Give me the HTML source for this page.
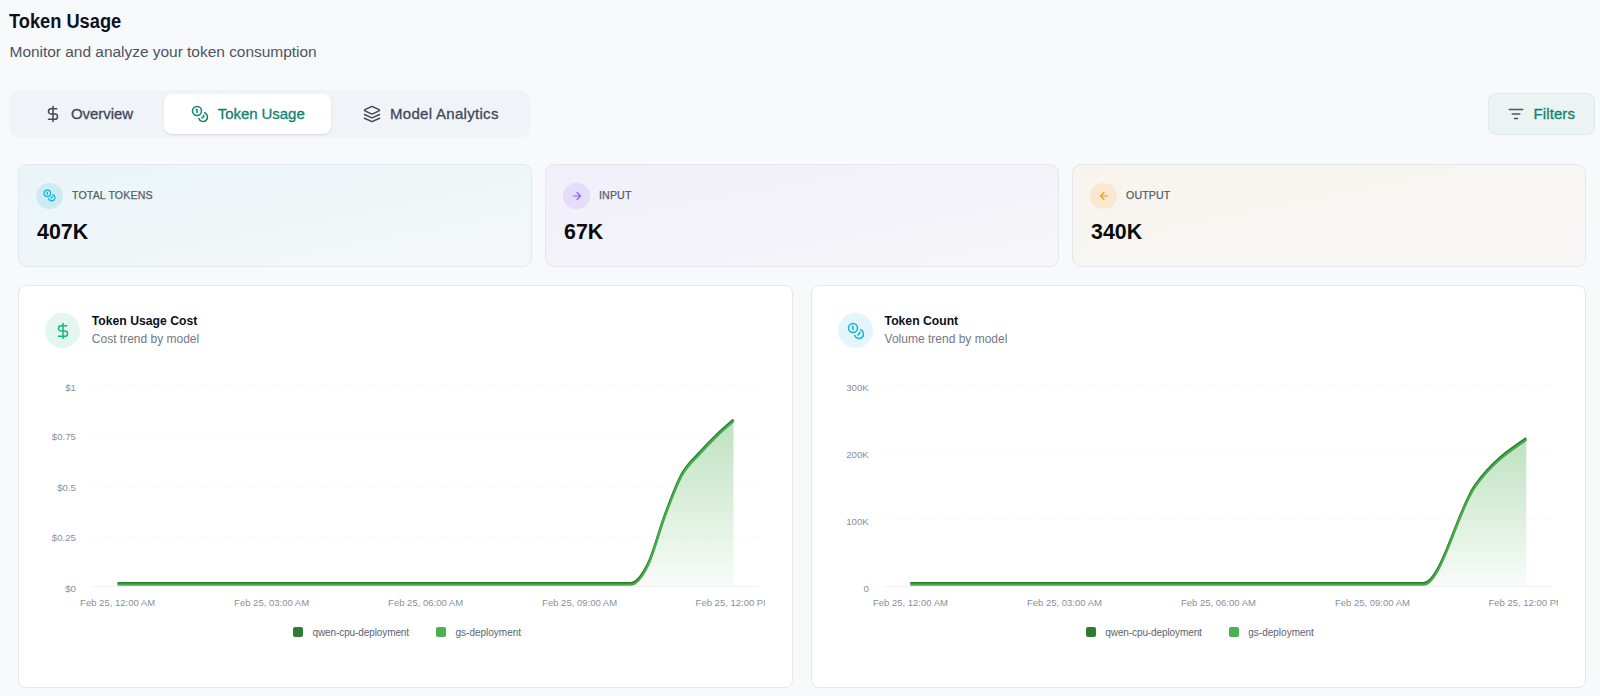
<!DOCTYPE html>
<html><head><meta charset="utf-8"><title>Token Usage</title>
<style>
html,body{margin:0;padding:0;}
body{width:1600px;height:696px;overflow:hidden;background:#f8f9fb;font-family:"Liberation Sans", sans-serif;position:relative;}
.t{position:absolute;white-space:nowrap;}
.ic{position:absolute;display:block;}
.box{position:absolute;box-sizing:border-box;}
</style></head><body>
<div class="t" style="left:9.30px;top:11.07px;font-size:20px;line-height:20px;color:#0b1220;font-weight:700;transform:scaleX(0.912);transform-origin:0 0;">Token Usage</div>
<div class="t" style="left:9.50px;top:43.88px;font-size:15.5px;line-height:15.5px;color:#4b5563;font-weight:400;letter-spacing:-0.03px;">Monitor and analyze your token consumption</div>
<div class="box" style="left:9px;top:90px;width:521px;height:48px;background:#f0f3f7;border-radius:10px;"></div>
<div class="box" style="left:164px;top:94px;width:167px;height:40px;background:#fff;border-radius:8px;box-shadow:0 1px 2px rgba(15,23,42,0.12);"></div>
<svg class="ic" style="left:43.85px;top:104.80px" width="18" height="18" viewBox="0 0 24 24" fill="none" stroke="#414957" stroke-width="2" stroke-linecap="round" stroke-linejoin="round"><line x1="12" x2="12" y1="2" y2="22"/><path d="M17 5H9.5a3.5 3.5 0 0 0 0 7h5a3.5 3.5 0 0 1 0 7H6"/></svg>
<div class="t" style="left:70.90px;top:105.90px;font-size:15px;line-height:15px;color:#414957;font-weight:400;letter-spacing:-0.04px;-webkit-text-stroke:0.3px #414957;">Overview</div>
<svg class="ic" style="left:190.50px;top:104.80px" width="18" height="18" viewBox="0 0 24 24" fill="none" stroke="#108272" stroke-width="2" stroke-linecap="round" stroke-linejoin="round"><circle cx="8" cy="8" r="6"/><path d="M18.09 10.37A6 6 0 1 1 10.34 18"/><path d="M7 6h1v4"/><path d="m16.71 13.88.7.71-2.82 2.82"/></svg>
<div class="t" style="left:217.70px;top:105.90px;font-size:15px;line-height:15px;color:#108272;font-weight:400;letter-spacing:-0.05px;-webkit-text-stroke:0.3px #108272;">Token Usage</div>
<svg class="ic" style="left:363.00px;top:104.80px" width="18" height="18" viewBox="0 0 24 24" fill="none" stroke="#414957" stroke-width="2" stroke-linecap="round" stroke-linejoin="round"><path d="m12.83 2.18a2 2 0 0 0-1.66 0L2.6 6.08a1 1 0 0 0 0 1.83l8.58 3.91a2 2 0 0 0 1.66 0l8.58-3.9a1 1 0 0 0 0-1.83Z"/><path d="m22 17.65-9.17 4.16a2 2 0 0 1-1.66 0L2 17.65"/><path d="m22 12.65-9.17 4.16a2 2 0 0 1-1.66 0L2 12.65"/></svg>
<div class="t" style="left:390.00px;top:105.90px;font-size:15px;line-height:15px;color:#414957;font-weight:400;letter-spacing:0.3px;-webkit-text-stroke:0.3px #414957;">Model Analytics</div>
<div class="box" style="left:1488px;top:93px;width:107px;height:42px;background:#ebf3f3;border:1px solid #e0eaea;border-radius:8px;"></div>
<svg class="ic" style="left:1506.75px;top:104.75px" width="18" height="18" viewBox="0 0 24 24" fill="none" stroke="#4b5563" stroke-width="2" stroke-linecap="round" stroke-linejoin="round"><path d="M3 6h18"/><path d="M7 12h10"/><path d="M10 18h4"/></svg>
<div class="t" style="left:1533.50px;top:106.10px;font-size:15px;line-height:15px;color:#108272;font-weight:400;letter-spacing:0.1px;-webkit-text-stroke:0.3px #108272;">Filters</div>
<div class="box" style="left:18.00px;top:164px;width:514px;height:103px;background:linear-gradient(to bottom right,#eaf5f8 0%,#f4f7f9 100%);border:1px solid #e3e8ef;border-radius:9px;"></div>
<div class="box" style="left:36.30px;top:182.7px;width:26.5px;height:26.5px;background:#cdebf3;border-radius:50%;"></div>
<svg class="ic" style="left:43.05px;top:189.45px" width="13" height="13" viewBox="0 0 24 24" fill="none" stroke="#0fb1d0" stroke-width="2.2" stroke-linecap="round" stroke-linejoin="round"><circle cx="8" cy="8" r="6"/><path d="M18.09 10.37A6 6 0 1 1 10.34 18"/><path d="M7 6h1v4"/><path d="m16.71 13.88.7.71-2.82 2.82"/></svg>
<div class="t" style="left:72.00px;top:190.03px;font-size:10.6px;line-height:10.6px;color:#565d69;font-weight:400;letter-spacing:0.15px;-webkit-text-stroke:0.25px #565d69;">TOTAL TOKENS</div>
<div class="t" style="left:37.10px;top:220.95px;font-size:22.5px;line-height:22.5px;color:#0a0a0a;font-weight:700;transform:scaleX(0.95);transform-origin:0 0;">407K</div>
<div class="box" style="left:545.00px;top:164px;width:514px;height:103px;background:linear-gradient(to bottom right,#f1eff9 0%,#f6f6f9 100%);border:1px solid #e3e8ef;border-radius:9px;"></div>
<div class="box" style="left:563.30px;top:182.7px;width:26.5px;height:26.5px;background:#e5dcf9;border-radius:50%;"></div>
<svg class="ic" style="left:570.55px;top:189.95px" width="12" height="12" viewBox="0 0 24 24" fill="none" stroke="#8b5cf6" stroke-width="2.2" stroke-linecap="round" stroke-linejoin="round"><path d="M5 12h14"/><path d="m12 5 7 7-7 7"/></svg>
<div class="t" style="left:599.00px;top:190.03px;font-size:10.6px;line-height:10.6px;color:#565d69;font-weight:400;letter-spacing:0.15px;-webkit-text-stroke:0.25px #565d69;">INPUT</div>
<div class="t" style="left:564.10px;top:220.95px;font-size:22.5px;line-height:22.5px;color:#0a0a0a;font-weight:700;transform:scaleX(0.95);transform-origin:0 0;">67K</div>
<div class="box" style="left:1072.00px;top:164px;width:514px;height:103px;background:linear-gradient(to bottom right,#f8f4ed 0%,#f7f7f6 100%);border:1px solid #e3e8ef;border-radius:9px;"></div>
<div class="box" style="left:1090.30px;top:182.7px;width:26.5px;height:26.5px;background:#f9e8cf;border-radius:50%;"></div>
<svg class="ic" style="left:1097.55px;top:189.95px" width="12" height="12" viewBox="0 0 24 24" fill="none" stroke="#f29a0c" stroke-width="2.2" stroke-linecap="round" stroke-linejoin="round"><path d="m12 19-7-7 7-7"/><path d="M19 12H5"/></svg>
<div class="t" style="left:1126.00px;top:190.03px;font-size:10.6px;line-height:10.6px;color:#565d69;font-weight:400;letter-spacing:0.15px;-webkit-text-stroke:0.25px #565d69;">OUTPUT</div>
<div class="t" style="left:1091.10px;top:220.95px;font-size:22.5px;line-height:22.5px;color:#0a0a0a;font-weight:700;transform:scaleX(0.95);transform-origin:0 0;">340K</div>
<div class="box" style="left:18px;top:285px;width:775px;height:403px;background:#fff;border:1px solid #e3e8ef;border-radius:8px;"></div>
<div class="box" style="left:45.20px;top:312.8px;width:35px;height:35px;background:#e4f6f0;border-radius:50%;"></div>
<svg class="ic" style="left:53.70px;top:322.10px" width="18" height="18" viewBox="0 0 24 24" fill="none" stroke="#17b57d" stroke-width="2" stroke-linecap="round" stroke-linejoin="round"><line x1="12" x2="12" y1="2" y2="22"/><path d="M17 5H9.5a3.5 3.5 0 0 0 0 7h5a3.5 3.5 0 0 1 0 7H6"/></svg>
<div class="t" style="left:91.80px;top:314.87px;font-size:12.2px;line-height:12.2px;color:#0b0f19;font-weight:700;">Token Usage Cost</div>
<div class="t" style="left:91.80px;top:333.14px;font-size:12px;line-height:12px;color:#737985;font-weight:400;">Cost trend by model</div>
<div class="t" style="right:1524.00px;top:382.79px;font-size:9.7px;line-height:9.7px;color:#8a8f98;font-weight:400;text-align:right;">$1</div>
<div class="t" style="right:1524.00px;top:432.49px;font-size:9.7px;line-height:9.7px;color:#8a8f98;font-weight:400;text-align:right;">$0.75</div>
<div class="t" style="right:1524.00px;top:483.29px;font-size:9.7px;line-height:9.7px;color:#8a8f98;font-weight:400;text-align:right;">$0.5</div>
<div class="t" style="right:1524.00px;top:532.59px;font-size:9.7px;line-height:9.7px;color:#8a8f98;font-weight:400;text-align:right;">$0.25</div>
<div class="t" style="right:1524.00px;top:583.79px;font-size:9.7px;line-height:9.7px;color:#8a8f98;font-weight:400;text-align:right;">$0</div>
<div class="t" style="left:-32.40px;width:300px;text-align:center;top:597.66px;font-size:9.5px;line-height:9.5px;color:#8a8f98;font-weight:400;">Feb 25, 12:00 AM</div>
<div class="t" style="left:121.60px;width:300px;text-align:center;top:597.66px;font-size:9.5px;line-height:9.5px;color:#8a8f98;font-weight:400;">Feb 25, 03:00 AM</div>
<div class="t" style="left:275.60px;width:300px;text-align:center;top:597.66px;font-size:9.5px;line-height:9.5px;color:#8a8f98;font-weight:400;">Feb 25, 06:00 AM</div>
<div class="t" style="left:429.60px;width:300px;text-align:center;top:597.66px;font-size:9.5px;line-height:9.5px;color:#8a8f98;font-weight:400;">Feb 25, 09:00 AM</div>
<div class="t" style="left:695.60px;top:597.66px;width:69.50px;overflow:hidden;font-size:9.5px;line-height:9.5px;color:#8a8f98;">Feb 25, 12:00 PM</div>
<svg class="ic" style="left:0;top:0" width="1600" height="696" viewBox="0 0 1600 696">
<defs><linearGradient id="g0" x1="0" y1="0" x2="0" y2="1"><stop offset="0%" stop-color="#4caf50" stop-opacity="0.36"/><stop offset="100%" stop-color="#4caf50" stop-opacity="0.04"/></linearGradient></defs>
<line x1="91.5" x2="759" y1="385.5" y2="385.5" stroke="#f6f6f8" stroke-width="1" stroke-dasharray="3 3"/>
<line x1="91.5" x2="759" y1="436.2" y2="436.2" stroke="#f6f6f8" stroke-width="1" stroke-dasharray="3 3"/>
<line x1="91.5" x2="759" y1="486.6" y2="486.6" stroke="#f6f6f8" stroke-width="1" stroke-dasharray="3 3"/>
<line x1="91.5" x2="759" y1="536.8" y2="536.8" stroke="#f6f6f8" stroke-width="1" stroke-dasharray="3 3"/>
<line x1="91.5" x2="759" y1="586.5" y2="586.5" stroke="#f1f1f2" stroke-width="1"/>
<path d="M117.50,584.00C282.91,584.00,448.31,584.00,613.72,584.00C619.43,584.00,625.13,584.00,630.83,584.00C636.54,584.00,642.24,576.15,647.94,564.70C653.65,553.25,659.35,530.37,665.06,515.30C670.76,500.23,676.46,484.57,682.17,474.30C687.87,464.03,693.57,460.10,699.28,453.70C704.98,447.30,710.68,441.42,716.39,435.90C722.09,430.38,727.80,425.49,733.50,420.60L733.50,586.3L117.50,586.3Z" fill="url(#g0)" stroke="none"/>
<path d="M117.50,584.00C282.91,584.00,448.31,584.00,613.72,584.00C619.43,584.00,625.13,584.00,630.83,584.00C636.54,584.00,642.24,576.15,647.94,564.70C653.65,553.25,659.35,530.37,665.06,515.30C670.76,500.23,676.46,484.57,682.17,474.30C687.87,464.03,693.57,460.10,699.28,453.70C704.98,447.30,710.68,441.42,716.39,435.90C722.09,430.38,727.80,425.49,733.50,420.60" fill="none" stroke="#267a2b" stroke-width="2.4" transform="translate(0,-0.9)"/>
<path d="M117.50,584.00C282.91,584.00,448.31,584.00,613.72,584.00C619.43,584.00,625.13,584.00,630.83,584.00C636.54,584.00,642.24,576.15,647.94,564.70C653.65,553.25,659.35,530.37,665.06,515.30C670.76,500.23,676.46,484.57,682.17,474.30C687.87,464.03,693.57,460.10,699.28,453.70C704.98,447.30,710.68,441.42,716.39,435.90C722.09,430.38,727.80,425.49,733.50,420.60" fill="none" stroke="#47ad4c" stroke-width="2.2" transform="translate(0,0.7)"/>
</svg>
<div class="box" style="left:293.20px;top:627px;width:9.5px;height:9.5px;background:#2e7d32;border-radius:2px;"></div>
<div class="t" style="left:312.50px;top:627.83px;font-size:10px;line-height:10px;color:#5b6270;font-weight:400;letter-spacing:-0.1px;">qwen-cpu-deployment</div>
<div class="box" style="left:436.40px;top:627px;width:9.5px;height:9.5px;background:#4caf50;border-radius:2px;"></div>
<div class="t" style="left:455.50px;top:627.83px;font-size:10px;line-height:10px;color:#5b6270;font-weight:400;">gs-deployment</div>
<div class="box" style="left:811px;top:285px;width:775px;height:403px;background:#fff;border:1px solid #e3e8ef;border-radius:8px;"></div>
<div class="box" style="left:838.00px;top:312.8px;width:35px;height:35px;background:#e4f6fb;border-radius:50%;"></div>
<svg class="ic" style="left:846.50px;top:322.10px" width="18" height="18" viewBox="0 0 24 24" fill="none" stroke="#13b3d3" stroke-width="2" stroke-linecap="round" stroke-linejoin="round"><circle cx="8" cy="8" r="6"/><path d="M18.09 10.37A6 6 0 1 1 10.34 18"/><path d="M7 6h1v4"/><path d="m16.71 13.88.7.71-2.82 2.82"/></svg>
<div class="t" style="left:884.60px;top:314.87px;font-size:12.2px;line-height:12.2px;color:#0b0f19;font-weight:700;">Token Count</div>
<div class="t" style="left:884.60px;top:333.14px;font-size:12px;line-height:12px;color:#737985;font-weight:400;">Volume trend by model</div>
<div class="t" style="right:731.20px;top:382.79px;font-size:9.7px;line-height:9.7px;color:#8a8f98;font-weight:400;text-align:right;">300K</div>
<div class="t" style="right:731.20px;top:449.79px;font-size:9.7px;line-height:9.7px;color:#8a8f98;font-weight:400;text-align:right;">200K</div>
<div class="t" style="right:731.20px;top:516.59px;font-size:9.7px;line-height:9.7px;color:#8a8f98;font-weight:400;text-align:right;">100K</div>
<div class="t" style="right:731.20px;top:583.79px;font-size:9.7px;line-height:9.7px;color:#8a8f98;font-weight:400;text-align:right;">0</div>
<div class="t" style="left:760.40px;width:300px;text-align:center;top:597.66px;font-size:9.5px;line-height:9.5px;color:#8a8f98;font-weight:400;">Feb 25, 12:00 AM</div>
<div class="t" style="left:914.40px;width:300px;text-align:center;top:597.66px;font-size:9.5px;line-height:9.5px;color:#8a8f98;font-weight:400;">Feb 25, 03:00 AM</div>
<div class="t" style="left:1068.40px;width:300px;text-align:center;top:597.66px;font-size:9.5px;line-height:9.5px;color:#8a8f98;font-weight:400;">Feb 25, 06:00 AM</div>
<div class="t" style="left:1222.40px;width:300px;text-align:center;top:597.66px;font-size:9.5px;line-height:9.5px;color:#8a8f98;font-weight:400;">Feb 25, 09:00 AM</div>
<div class="t" style="left:1488.40px;top:597.66px;width:69.50px;overflow:hidden;font-size:9.5px;line-height:9.5px;color:#8a8f98;">Feb 25, 12:00 PM</div>
<svg class="ic" style="left:0;top:0" width="1600" height="696" viewBox="0 0 1600 696">
<defs><linearGradient id="g792" x1="0" y1="0" x2="0" y2="1"><stop offset="0%" stop-color="#4caf50" stop-opacity="0.36"/><stop offset="100%" stop-color="#4caf50" stop-opacity="0.04"/></linearGradient></defs>
<line x1="884.3" x2="1551.8" y1="385.5" y2="385.5" stroke="#f6f6f8" stroke-width="1" stroke-dasharray="3 3"/>
<line x1="884.3" x2="1551.8" y1="452.5" y2="452.5" stroke="#f6f6f8" stroke-width="1" stroke-dasharray="3 3"/>
<line x1="884.3" x2="1551.8" y1="519.5" y2="519.5" stroke="#f6f6f8" stroke-width="1" stroke-dasharray="3 3"/>
<line x1="884.3" x2="1551.8" y1="586.5" y2="586.5" stroke="#f1f1f2" stroke-width="1"/>
<path d="M910.30,584.00C1064.30,584.00,1218.30,584.00,1372.30,584.00C1389.41,584.00,1406.52,584.00,1423.63,584.00C1440.74,584.00,1457.86,510.53,1474.97,486.40C1492.08,462.27,1509.19,450.73,1526.30,439.20L1526.30,586.3L910.30,586.3Z" fill="url(#g792)" stroke="none"/>
<path d="M910.30,584.00C1064.30,584.00,1218.30,584.00,1372.30,584.00C1389.41,584.00,1406.52,584.00,1423.63,584.00C1440.74,584.00,1457.86,510.53,1474.97,486.40C1492.08,462.27,1509.19,450.73,1526.30,439.20" fill="none" stroke="#267a2b" stroke-width="2.4" transform="translate(0,-0.9)"/>
<path d="M910.30,584.00C1064.30,584.00,1218.30,584.00,1372.30,584.00C1389.41,584.00,1406.52,584.00,1423.63,584.00C1440.74,584.00,1457.86,510.53,1474.97,486.40C1492.08,462.27,1509.19,450.73,1526.30,439.20" fill="none" stroke="#47ad4c" stroke-width="2.2" transform="translate(0,0.7)"/>
</svg>
<div class="box" style="left:1086.00px;top:627px;width:9.5px;height:9.5px;background:#2e7d32;border-radius:2px;"></div>
<div class="t" style="left:1105.30px;top:627.83px;font-size:10px;line-height:10px;color:#5b6270;font-weight:400;letter-spacing:-0.1px;">qwen-cpu-deployment</div>
<div class="box" style="left:1229.20px;top:627px;width:9.5px;height:9.5px;background:#4caf50;border-radius:2px;"></div>
<div class="t" style="left:1248.30px;top:627.83px;font-size:10px;line-height:10px;color:#5b6270;font-weight:400;">gs-deployment</div>
</body></html>
